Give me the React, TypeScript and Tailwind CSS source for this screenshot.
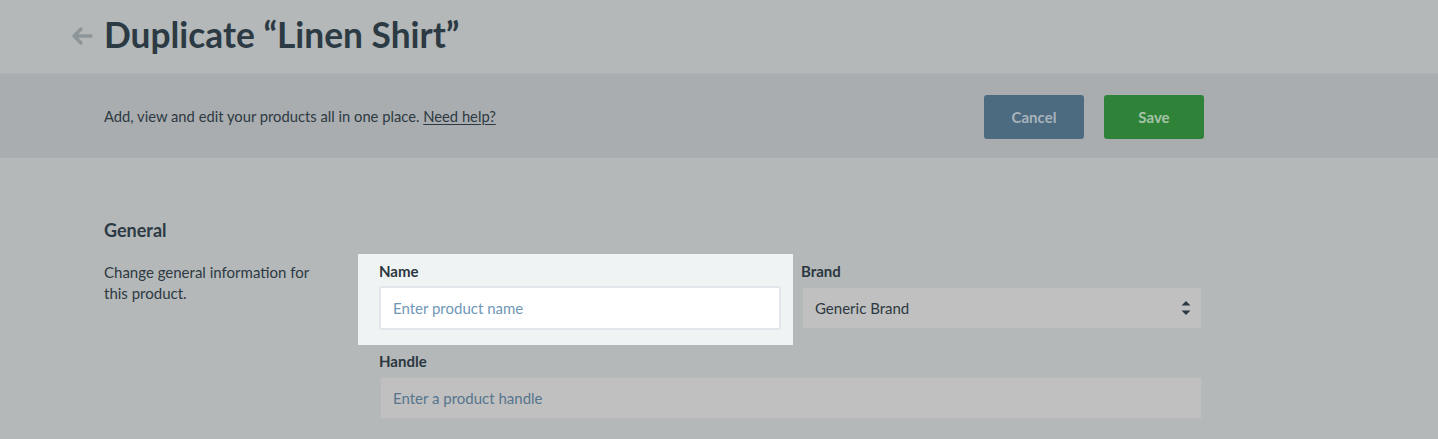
import React from "react";

const Field = ({ label, children }: { label: string; children: React.ReactNode }) => (
  <div className="flex flex-col">
    <label className="text-[15px] font-bold text-[#2b3740] leading-[18px] mb-[6px]">{label}</label>
    {children}
  </div>
);

const App = () => {
  return (
    <div className="w-[1438px] h-[439px] overflow-hidden bg-[#b4b8b9] font-['Lato',sans-serif] text-[#2b3740]">
      <div className="h-[74px] flex items-center pl-[70px] pb-[4px] border-b border-[#aeb2b4]">
        <svg width="25" height="24" viewBox="0 0 25 24" className="mr-[9px] mt-[2px]">
          <path d="M21 12H5M11 5l-7 7 7 7" fill="none" stroke="#8c9599" strokeWidth="3.4" strokeLinecap="round" strokeLinejoin="round" />
        </svg>
        <h1 className="text-[35.3px] font-bold text-[#2c3a44] leading-none">Duplicate “Linen Shirt”</h1>
      </div>

      <div className="h-[84px] bg-[#a9adb0] flex items-center justify-between pl-[104px] pr-[234px]">
        <p className="text-[14.75px] text-[#2d3942]">
          Add, view and edit your products all in one place.{" "}
          <a className="underline underline-offset-2">Need help?</a>
        </p>
        <div className="flex gap-[20px] mt-[2px]">
          <button className="w-[100px] h-[44px] rounded-[3px] bg-[#4c6a80] text-[#a8b3bb] text-[15px] font-bold">Cancel</button>
          <button className="w-[100px] h-[44px] rounded-[3px] bg-[#2f8338] text-[#a6c3a7] text-[15px] font-bold">Save</button>
        </div>
      </div>

      <div className="pl-[104px] pt-[60px] flex">
        <div className="w-[275px] shrink-0">
          <h2 className="text-[18px] font-bold leading-[24px] text-[#2c3a44]">General</h2>
          <p className="mt-[20px] text-[15px] leading-[21px] text-[#2d3942] w-[220px]">
            Change general information for this product.
          </p>
        </div>
        <div className="w-[824px] pt-[44px] flex flex-col gap-[22px]">
          <div className="grid grid-cols-2 gap-[20px]">
            <div className="-ml-[21px] pl-[21px] -mr-[12px] pr-[12px] -mt-[8px] pt-[8px] -mb-[15px] pb-[15px] bg-[#eff3f4]">
              <Field label="Name">
                <div className="h-[44px] bg-white border-[2px] border-[#e1e7ea] rounded-[3px] flex items-center px-[12px]">
                  <span className="text-[15px] text-[#6f98b6]">Enter product name</span>
                </div>
              </Field>
            </div>
            <Field label="Brand">
              <div className="h-[44px] bg-[#c0c0c0] border-[2px] border-[#b6b9ba] rounded-[3px] flex items-center justify-between pl-[12px] pr-[10px]">
                <span className="text-[15px] text-[#2d3942]">Generic Brand</span>
                <svg width="10" height="18" viewBox="0 0 10 18">
                  <path d="M0.5 6.5L5 2L9.5 6.5Z" fill="#2d3942" />
                  <path d="M0.5 11.5L5 16L9.5 11.5Z" fill="#2d3942" />
                </svg>
              </div>
            </Field>
          </div>
          <Field label="Handle">
            <div className="h-[44px] bg-[#c0c0c0] border-[2px] border-[#b6b9ba] rounded-[3px] flex items-center px-[12px]">
              <span className="text-[15px] text-[#56758d]">Enter a product handle</span>
            </div>
          </Field>
        </div>
      </div>
    </div>
  );
};

export default App;
